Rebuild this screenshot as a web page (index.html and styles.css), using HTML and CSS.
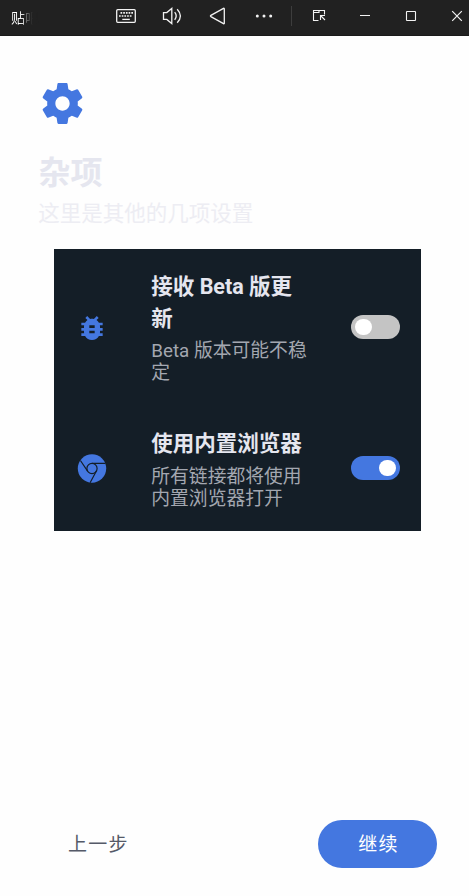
FILE: index.html
```html
<!DOCTYPE html>
<html lang="zh-CN">
<head>
<meta charset="utf-8">
<title>杂项</title>
<link rel="stylesheet" href="styles.css">
</head>
<body>
<header class="titlebar">
  <span class="app-name">贴吧</span>
  <svg class="bar-icons" width="364" height="36" viewBox="105 0 364 36" fill="none" stroke="#f2f2f2" stroke-width="1.3">
    <rect x="116.700" y="9.700" width="18.600" height="12.600" rx="1"/>
    <path d="M120.500 12.900h13M119 16h13" stroke-width="1.600" stroke-dasharray="1.700 1"/>
    <path d="M122.300 19.400h7.500"/>
    <path d="M163.500 12.600h3.300l5-4.200v15.200l-5-4.200h-3.300z"/>
    <path d="M174.700 12.200q3 3.800 0 7.600M177.200 9.200q6.400 6.800 0 13.600"/>
    <path d="M224.300 8.700v14.600q0 .7-.8.300l-12.600-7q-.9-.6 0-1.200l12.600-7q.8-.4.800.3z"/>
    <g fill="#f2f2f2" stroke="none"><circle cx="257.300" cy="16" r="1.500"/><circle cx="264" cy="16" r="1.500"/><circle cx="270.700" cy="16" r="1.500"/></g>
    <path d="M291.500 6v20" stroke="#3d3d3d" stroke-width="1"/>
    <path d="M318.500 20.500h-5v-10h11v4M313.500 12.500h5.500v-2M320.500 20v-4.500h4.500M320.500 15.500l4.500 4.500" stroke-width="1.100"/>
    <path d="M360 15.500h10" stroke-width="1"/>
    <rect x="406.500" y="11.500" width="9" height="9" rx=".5" stroke-width="1.100"/>
    <path d="M452.200 11.200l9.600 9.600m0-9.600l-9.600 9.600" stroke-width="1.200"/>
  </svg>
</header>
<main class="page">
  <svg class="gear" viewBox="0 0 24 24"><path fill="#4477e0" d="M19.430 12.980c.040-.320.070-.640.070-.980s-.030-.660-.070-.980l2.110-1.650c.190-.150.240-.420.120-.640l-2-3.460c-.120-.220-.390-.300-.610-.220l-2.490 1c-.520-.400-1.080-.730-1.690-.980l-.380-2.650C14.460 2.180 14.250 2 14 2h-4c-.250 0-.460.180-.490.420l-.380 2.650c-.610.250-1.170.590-1.690.980l-2.490-1c-.230-.090-.490 0-.610.220l-2 3.460c-.130.220-.070.490.120.640l2.110 1.650c-.040.320-.070.650-.070.980s.030.660.070.980l-2.110 1.650c-.190.150-.240.420-.120.640l2 3.460c.120.220.390.300.610.220l2.490-1c.520.400 1.080.730 1.690.980l.380 2.650c.030.240.240.420.490.420h4c.250 0 .460-.180.490-.420l.380-2.650c.610-.250 1.170-.590 1.690-.980l2.490 1c.230.090.490 0 .610-.220l2-3.460c.120-.220.070-.490-.120-.640l-2.110-1.650zM12 15.500c-1.930 0-3.500-1.570-3.500-3.500s1.570-3.500 3.500-3.500 3.500 1.570 3.500 3.500-1.570 3.500-3.500 3.500z"/></svg>
  <h1 class="heading">杂项</h1>
  <p class="subheading">这里是其他的几项设置</p>
  <section class="settings">
    <div class="row row-beta">
      <svg class="row-icon" viewBox="0 0 24 24"><path fill="#4477e0" d="M20 8h-2.810c-.450-.780-1.070-1.450-1.820-1.960L17 4.410 15.590 3l-2.170 2.170C12.960 5.060 12.490 5 12 5c-.490 0-.960.060-1.410.170L8.410 3 7 4.410l1.620 1.630C7.880 6.550 7.260 7.220 6.810 8H4v2h2.090c-.050.330-.090.660-.090 1v1H4v2h2v1c0 .340.040.670.090 1H4v2h2.810c1.040 1.790 2.970 3 5.190 3s4.150-1.210 5.190-3H20v-2h-2.090c.050-.330.090-.660.090-1v-1h2v-2h-2v-1c0-.340-.040-.670-.090-1H20V8zm-6 8h-4v-2h4v2zm0-4h-4v-2h4v2z"/></svg>
      <div class="text"><h2>接收 Beta 版更新</h2><p>Beta 版本可能不稳定</p></div>
      <span class="switch"></span>
    </div>
    <div class="row row-browser">
      <svg class="row-icon" viewBox="0 0 32 32"><circle cx="16" cy="15.500" r="14.200" fill="#4477e0"/><g fill="none" stroke="#141e27" stroke-width="1.200"><circle cx="16" cy="15.500" r="5.100"/><path d="M16 10.400h13.500M4.400 7.500l7.200 10.600M20.400 18l-6.300 11.700"/></g></svg>
      <div class="text"><h2>使用内置浏览器</h2><p>所有链接都将使用内置浏览器打开</p></div>
      <span class="switch on"></span>
    </div>
  </section>
  <footer class="actions">
    <button class="back">上一步</button>
    <button class="next">继续</button>
  </footer>
</main>
</body>
</html>
```
FILE: styles.css
```css
* { box-sizing: border-box; }
body {
  margin: 0;
  height: 896px;
  display: flex;
  flex-direction: column;
  background: #fefefe;
  font-family: Roboto, "Noto Sans CJK SC", sans-serif;
  overflow: hidden;
}
h1, h2, p { margin: 0; }
.titlebar {
  height: 36px;
  flex: none;
  display: flex;
  justify-content: space-between;
  background: #212121;
  border-bottom: 1px solid #1a1a1a;
}
.app-name {
  width: 30px;
  margin-left: 11px;
  white-space: nowrap;
  font-size: 14px;
  line-height: 36px;
  background: linear-gradient(90deg, #fff 8px, #ccc 13px, #777 15px, #2a2a2a 21px, #212121 22px);
  background-clip: text;
  color: transparent;
}
.bar-icons { flex: none; }
.page {
  flex: 1;
  display: flex;
  flex-direction: column;
  padding: 43px 32px 28px 38px;
}
.gear { width: 49px; height: 49px; flex: none; }
.heading {
  margin: 21px 0 0 .5px;
  font-size: 32px;
  line-height: 48px;
  font-weight: 700;
  color: #e5e6ef;
}
.subheading {
  margin: 1px 0 0 .3px;
  font-size: 21.500px;
  line-height: 32px;
  color: #ededf3;
}
.settings {
  width: 367px;
  height: 282px;
  margin: 19px 0 0 16px;
  background: #141e27;
}
.row {
  display: grid;
  grid-template-columns: 32px 243px 49px;
  align-items: center;
  padding-left: 22px;
}
.row-beta { height: 157px; }
.row-browser { height: 125px; }
.row-icon { width: 32px; height: 32px; }
.text {
  width: 160px;
  margin-left: 43.300px;
  padding-bottom: 1px;
}
.text h2 {
  font-size: 21.500px;
  line-height: 32px;
  font-weight: 700;
  color: #e5e6ef;
}
.text p {
  margin-top: 6px;
  font-size: 18.800px;
  line-height: 22px;
  color: #a3a7b0;
}
.row-beta .text p { margin-top: 5px; }
.row-browser .text { padding-bottom: 0; }
.switch {
  width: 48.500px;
  height: 24.500px;
  margin-bottom: 1px;
  padding: 4px;
  display: flex;
  border-radius: 13px;
  background: #c4c4c4;
}
.switch::before {
  content: "";
  width: 16.500px;
  height: 16.500px;
  border-radius: 50%;
  background: #fff;
}
.switch.on { background: #4477e0; justify-content: flex-end; }
.actions {
  margin-top: auto;
  display: flex;
  justify-content: space-between;
}
button {
  height: 48px;
  border: 0;
  font: 19px/48px Roboto, "Noto Sans CJK SC", sans-serif;
  letter-spacing: 1.200px;
}
.back { padding: 1px 0 0 30px; background: none; color: #555a68; }
.next { width: 119px; padding: 1px 0 0 2px; border-radius: 24px; background: #4477e0; color: #fff; }
```
